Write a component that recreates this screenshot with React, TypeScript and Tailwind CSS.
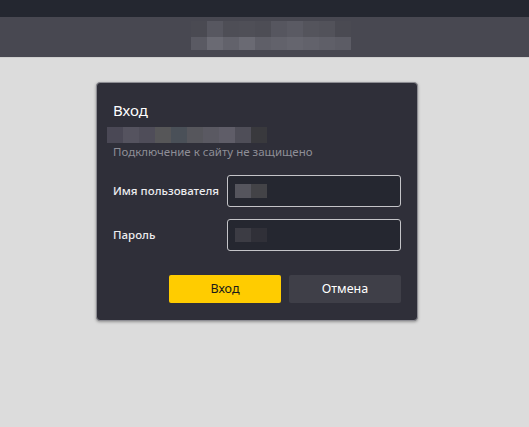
const headerTop = ["#4a4a52", "#575760", "#4e4e56", "#4f4f57", "#4d4d55", "#56565f", "#5a5a63", "#54545c", "#52525a", "#4a4a52"];
const headerBottom = ["#5a5a63", "#6a6a73", "#62626b", "#6a6a73", "#5f5f68", "#62626b", "#65656e", "#62626b", "#5f5f68", "#5c5c65"];
const siteBlocks = ["#4a4855", "#55535f", "#4f4d59", "#565658", "#4a5058", "#56565c", "#5a5962", "#5f5d68", "#4f4e58", "#39393d"];

function Blur({ colors, h }: { colors: string[]; h: string }) {
  return (
    <div className="flex">
      {colors.map((c, i) => (
        <div key={i} className={`w-[16px] ${h}`} style={{ backgroundColor: c }} />
      ))}
    </div>
  );
}

function Field({ label, blocks }: { label: string; blocks: string[] }) {
  return (
    <div className="flex items-center">
      <span className="w-[114px] shrink-0 text-[11.5px] font-medium text-[#ececef]">{label}</span>
      <div className="flex h-[32px] w-[174px] shrink-0 items-center rounded-[3px] border border-[#c4c4c8] bg-[#252730] pl-[7px]">
        <Blur colors={blocks} h="h-[14px]" />
      </div>
    </div>
  );
}

export default function App() {
  return (
    <div
      className="flex h-[427px] w-[529px] flex-col bg-[#dcdcdc]"
      style={{ fontFamily: '"Noto Sans", "Open Sans", sans-serif' }}
    >
      <div className="h-[17px] bg-[#242730]" />
      <div className="flex h-[40px] items-start bg-[#484851] pl-[191px] pt-[4px]">
        <div className="flex flex-col">
          <Blur colors={headerTop} h="h-[16px]" />
          <Blur colors={headerBottom} h="h-[13px]" />
        </div>
      </div>
      <div className="border-t border-[#cfcfcf] pl-[96px] pt-[24px]">
        <div className="flex h-[239px] w-[322px] flex-col rounded-[4px] border border-[#8d8d93] bg-[#2f2f39] pb-[16px] pl-[16px] pr-[16px] pt-[16px] shadow-[0_1px_3px_rgba(0,0,0,0.35)]">
          <div className="text-[15px] leading-[22px] text-white">Вход</div>
          <div className="-ml-[6px] mt-[6px]">
            <Blur colors={siteBlocks} h="h-[16px]" />
          </div>
          <div className="mt-[1px] text-[11.5px] leading-[16px] text-[#8e8e96]">
            Подключение к сайту не защищено
          </div>
          <div className="mt-[15px] flex flex-col gap-[12px]">
            <Field label="Имя пользователя" blocks={["#55555d", "#434347"]} />
            <Field label="Пароль" blocks={["#3c3c44", "#303038"]} />
          </div>
          <div className="mt-[24px] flex justify-end gap-[8px]">
            <button className="h-[28px] w-[112px] rounded-[2px] bg-[#ffcc00] text-[12.5px] text-[#1a1a1a]">
              Вход
            </button>
            <button className="h-[28px] w-[112px] rounded-[2px] bg-[#3f3f48] text-[12.5px] text-white">
              Отмена
            </button>
          </div>
        </div>
      </div>
    </div>
  );
}
